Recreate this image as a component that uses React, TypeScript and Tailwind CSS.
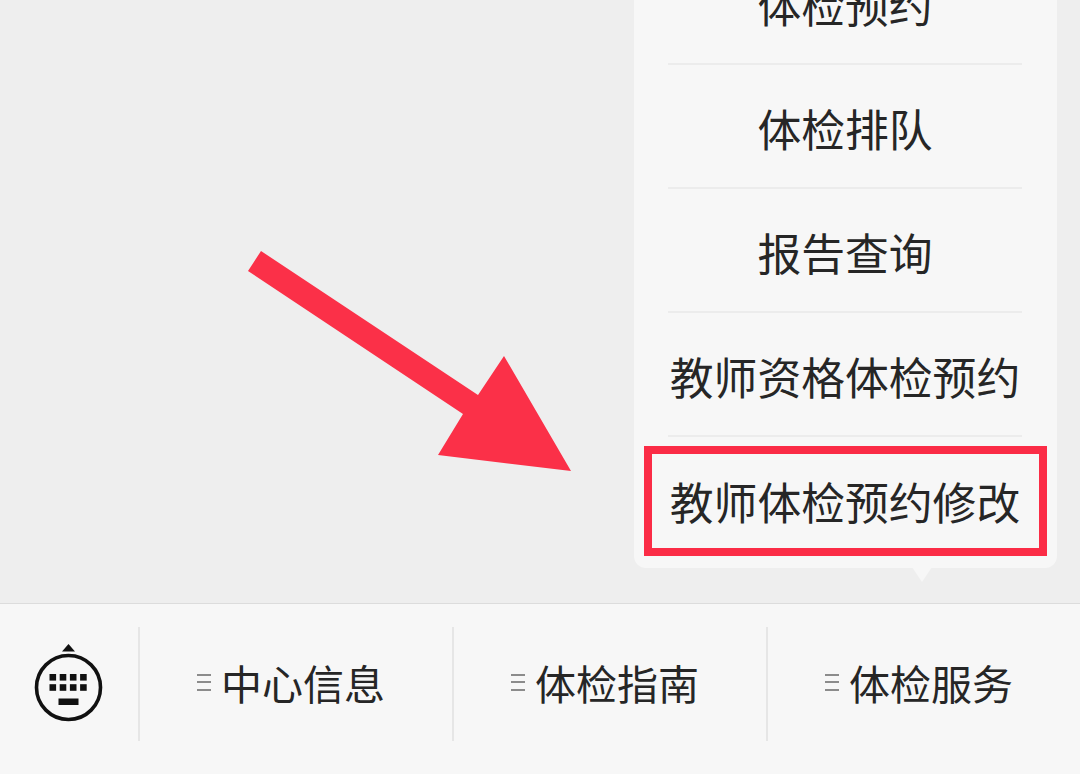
const menuItems = ['体检预约', '体检排队', '报告查询', '教师资格体检预约', '教师体检预约修改'];
const tabs = ['中心信息', '体检指南', '体检服务'];

function KeyboardIcon() {
  const keys = [];
  for (let row = 0; row < 2; row++) {
    for (let col = 0; col < 4; col++) {
      keys.push(<rect key={`${row}-${col}`} x={15.5 + col * 10.2} y={31 + row * 10.2} width="6.6" height="6.6" fill="#111" />);
    }
  }
  return (
    <svg width="70" height="80" viewBox="0 0 70 80" className="block">
      <polygon points="34.5,1 28,8.5 41,8.5" fill="#111" />
      <circle cx="34.5" cy="44.5" r="32" fill="none" stroke="#111" strokeWidth="3.6" />
      {keys}
      <rect x="24.5" y="55.5" width="20" height="6.5" fill="#111" />
    </svg>
  );
}

function MenuGlyph() {
  return (
    <div className="flex w-[14px] flex-col gap-[5.5px]">
      <div className="h-[2px] bg-[#8c8c8c]" />
      <div className="h-[2px] bg-[#8c8c8c]" />
      <div className="h-[2px] bg-[#8c8c8c]" />
    </div>
  );
}

export default function App() {
  return (
    <div
      className="relative flex h-[774px] w-[1080px] flex-col overflow-hidden bg-[#eeeeee] text-[#262626]"
      style={{ fontFamily: '"Noto Sans CJK SC", "Liberation Sans", sans-serif' }}
    >
      <div className="flex h-[603px] items-end justify-end pr-[23px] pb-[35px]">
        <div className="relative w-[423px] rounded-[12px] bg-[#f7f7f7] pb-[7px]">
          {menuItems.map((item, i) => (
            <div
              key={item}
              className={`mr-[35px] ml-[34px] flex h-[124px] items-center justify-center pt-[6px] text-[43.8px] leading-none whitespace-nowrap ${
                i < menuItems.length - 1 ? 'border-b-2 border-[#ececec]' : ''
              }`}
            >
              {item}
            </div>
          ))}
          <div className="absolute right-[10px] bottom-[12px] left-[10px] h-[110px] border-[8px] border-[#fb2c46]" />
          <svg width="20" height="16" viewBox="0 0 20 16" className="absolute right-[125px] bottom-[-15px]">
            <polygon points="0,0 20,0 10,15" fill="#f7f7f7" />
          </svg>
        </div>
      </div>

      <div className="flex h-[171px] items-start border-t border-[#dcdcdc] bg-[#f7f7f7] pt-[23px]">
        <div className="flex h-[114px] w-[138px] items-center justify-center pb-[3px]">
          <KeyboardIcon />
        </div>
        {tabs.map((tab) => (
          <div key={tab} className="flex h-[114px] flex-1 items-center justify-center gap-[10px] border-l-2 border-[#e6e6e6] pr-[10px] pb-[4px] text-[41px] leading-none">
            <MenuGlyph />
            <span className="whitespace-nowrap">{tab}</span>
          </div>
        ))}
      </div>

      <svg width="1080" height="774" viewBox="0 0 1080 774" className="pointer-events-none absolute top-0 left-0">
        <polygon points="261,251 248,271 463,414 438,455 571,471 504,356 478,395" fill="#fb3048" />
      </svg>
    </div>
  );
}
